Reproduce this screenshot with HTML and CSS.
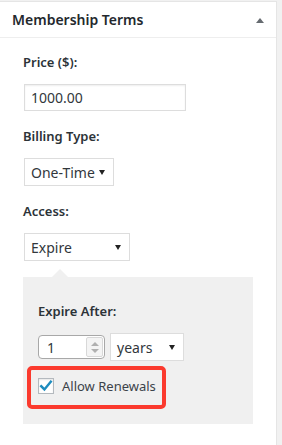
FILE: index.html
```html
<!DOCTYPE html>
<html>
<head>
<meta charset="utf-8">
<link rel="stylesheet" href="styles.css">
</head>
<body>
<div class="postbox">
  <div class="hndle">
    <span class="title">Membership Terms</span>
    <span class="toggle"></span>
  </div>
  <div class="inside">
    <div class="field">
      <label class="lbl">Price ($):</label>
      <input class="text-input" type="text" value="1000.00">
    </div>
    <div class="field">
      <label class="lbl">Billing Type:</label>
      <div class="select sel-billing"><span>One-Time</span><span class="caret"></span></div>
    </div>
    <div class="field">
      <label class="lbl">Access:</label>
      <div class="select sel-access"><span>Expire</span><span class="caret"></span></div>
    </div>
    <div class="subbox">
      <label class="lbl">Expire After:</label>
      <div class="expire-row">
        <div class="number">
          <input class="num-input" type="text" value="1">
          <span class="spin"><span class="up"></span><span class="down"></span></span>
        </div>
        <div class="select sel-years"><span>years</span><span class="caret"></span></div>
      </div>
      <div class="highlight">
        <span class="checkbox">
          <svg width="14" height="14" viewBox="0 0 14 14"><path d="M2.2 7.2 L5.4 10.4 L11.8 2.6" fill="none" stroke="#1e8cbe" stroke-width="2.4" stroke-linecap="square"/></svg>
        </span>
        <span class="cb-label">Allow Renewals</span>
      </div>
    </div>
  </div>
</div>
</body>
</html>
```

FILE: styles.css
```css
html, body {
  margin: 0;
  padding: 0;
  background: #f1f1f1;
  font-family: "Noto Sans", "Open Sans", sans-serif;
  color: #23282d;
}

body {
  height: 445px;
  overflow: hidden;
}

.postbox {
  box-sizing: border-box;
  margin-top: 1px;
  margin-left: -1px;
  width: 278px;
  height: 450px;
  background: #fff;
  border: 1px solid #e5e5e5;
}

.hndle {
  display: flex;
  justify-content: space-between;
  align-items: center;
  padding: 8px 12px 8px 12px;
  height: 19px;
  border-bottom: 1px solid #eee;
}

.title {
  font-size: 14px;
  line-height: 19px;
  font-weight: 600;
  color: #23282d;
}

.toggle {
  width: 0;
  height: 0;
  border-left: 4px solid transparent;
  border-right: 4px solid transparent;
  border-bottom: 5px solid #666b70;
  margin-top: 1px;
}

.inside {
  padding: 15px 0 0 23px;
}

.field {
  margin-bottom: 16px;
}

.lbl {
  display: block;
  font-size: 13px;
  line-height: 18px;
  font-weight: 600;
  color: #2c3338;
  margin-bottom: 13px;
}

.text-input {
  display: block;
  box-sizing: border-box;
  margin: 0 0 0 1px;
  width: 162px;
  height: 27px;
  border: 1px solid #ddd;
  box-shadow: inset 0 1px 2px rgba(0,0,0,.07);
  padding: 0 6px;
  font-family: inherit;
  font-size: 14px;
  color: #32373c;
  outline: none;
}

.select {
  box-sizing: border-box;
  display: flex;
  align-items: center;
  justify-content: space-between;
  height: 28px;
  margin-left: 1px;
  border: 1px solid #ddd;
  background: #fff;
  padding: 0 8px 0 6px;
  font-size: 14px;
  color: #32373c;
}

.sel-billing { width: 90px; }
.sel-access { width: 106px; }
.sel-years { width: 74px; margin-left: 0; }

.caret {
  width: 0;
  height: 0;
  border-left: 3px solid transparent;
  border-right: 3px solid transparent;
  border-top: 5px solid #222;
}

.subbox {
  position: relative;
  box-sizing: border-box;
  width: 230px;
  margin-top: 14px;
  background: #f0f0f0;
  padding: 25px 15px 15px 15px;
}

.subbox::before {
  content: "";
  position: absolute;
  top: -8px;
  left: 29px;
  border-left: 8px solid transparent;
  border-right: 8px solid transparent;
  border-bottom: 8px solid #f0f0f0;
}

.subbox .lbl {
  margin-bottom: 13px;
}

.expire-row {
  display: flex;
  align-items: center;
  gap: 5px;
}

.number {
  box-sizing: border-box;
  display: flex;
  width: 67px;
  height: 24px;
  border: 1px solid #a8a8a8;
  border-radius: 4px;
  background: #fff;
  overflow: hidden;
}

.num-input {
  flex: 1;
  min-width: 0;
  border: none;
  outline: none;
  padding: 0 0 0 8px;
  font-family: inherit;
  font-size: 14px;
  color: #32373c;
  background: transparent;
}

.spin {
  display: flex;
  flex-direction: column;
  align-items: center;
  justify-content: space-around;
  width: 15px;
  margin: 1px 1px 1px 0;
  border: 1px solid #d8d8d8;
  border-radius: 2px;
  background: #f4f4f4;
  padding: 2px 0;
}

.up, .down {
  width: 0;
  height: 0;
  border-left: 4px solid transparent;
  border-right: 4px solid transparent;
}
.up { border-bottom: 4px solid #b0b0b0; }
.down { border-top: 4px solid #b0b0b0; }

.highlight {
  box-sizing: border-box;
  display: flex;
  align-items: center;
  gap: 8px;
  width: 139px;
  height: 43px;
  margin: 5px 0 0 -11px;
  padding: 0 0 3px 7px;
  border: 4px solid #fb3a2e;
  border-radius: 5px;
}

.checkbox {
  box-sizing: border-box;
  display: flex;
  align-items: center;
  justify-content: center;
  width: 16px;
  height: 16px;
  border: 1px solid #b4b9be;
  background: #fff;
  box-shadow: inset 0 1px 2px rgba(0,0,0,.1);
}

.cb-label {
  font-size: 13px;
  color: #3c434a;
}
```
